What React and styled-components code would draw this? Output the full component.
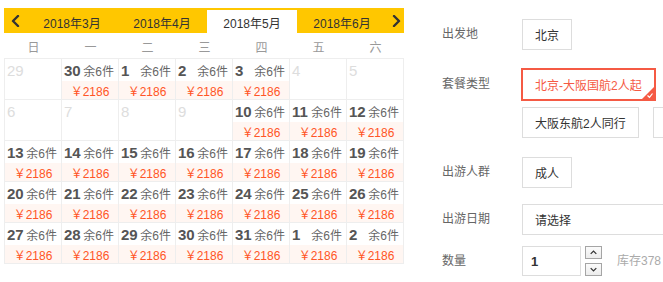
import React from "react";
import styled, { createGlobalStyle, css } from "styled-components";

const GlobalStyle = createGlobalStyle`
  html, body {
    margin: 0;
    padding: 0;
    overflow: hidden;
    background: #fff;
  }
  body {
    font-family: "Liberation Sans", "Noto Sans CJK SC", sans-serif;
    font-size: 12px;
    color: #333;
  }
`;

const Page = styled.div`
  display: flex;
  align-items: flex-start;
  width: 900px;
`;

/* ---------- calendar ---------- */

const Calendar = styled.div`
  width: 400px;
  margin: 8px 0 0 4px;
`;

const MonthBar = styled.div`
  display: flex;
  height: 25px;
  background: #ffc700;
`;

const Arrow = styled.button`
  width: ${(p) => p.w}px;
  border: 0;
  padding: 0;
  background: transparent;
  display: flex;
  align-items: center;
  justify-content: center;
  cursor: pointer;
`;

const MonthTab = styled.div`
  width: 90px;
  margin-top: 2px;
  display: flex;
  align-items: center;
  justify-content: center;
  font-size: 12px;
  color: #333;
  padding-top: 1px;

  ${(p) =>
    p.active &&
    css`
      background: #fff;
    `}
`;

const WeekRow = styled.div`
  display: grid;
  grid-template-columns: repeat(7, 57px);
  height: 25px;
  align-items: center;
  padding-left: 1px;
`;

const WeekDay = styled.div`
  text-align: center;
  color: #999;
  font-size: 12px;
  padding-top: 2px;
`;

const Grid = styled.div`
  display: grid;
  grid-template-columns: repeat(7, 57px);
  border-top: 1px solid #eee;
  border-left: 1px solid #eee;
`;

const Cell = styled.div`
  height: 40px;
  border-right: 1px solid #eee;
  border-bottom: 1px solid #eee;
  display: flex;
  flex-direction: column;
`;

const CellTop = styled.div`
  height: 22px;
  display: flex;
  align-items: center;
  justify-content: space-between;
  padding: 0 4px 0 2px;
`;

const DayNum = styled.span`
  font-size: 15px;
  font-weight: ${(p) => (p.muted ? 400 : 700)};
  color: ${(p) => (p.muted ? "#ddd" : "#555")};
`;

const Stock = styled.span`
  font-size: 12px;
  color: #666;
`;

const Price = styled.div`
  height: 18px;
  background: #fff6f2;
  color: #ff5526;
  font-size: 12px;
  display: flex;
  align-items: center;
  justify-content: center;
`;

/* ---------- form ---------- */

const Form = styled.div`
  margin-left: 38px;
  padding-top: 19px;
  display: flex;
  flex-direction: column;
`;

const Row = styled.div`
  display: flex;
  align-items: flex-start;
  margin-bottom: ${(p) => p.gap || 0}px;
`;

const Label = styled.div`
  width: 80px;
  line-height: 31px;
  color: #666;
  font-size: 12px;
`;

const Options = styled.div`
  width: 254px;
  display: flex;
  flex-wrap: wrap;
  gap: 7px 14px;
`;

const Option = styled.div`
  position: relative;
  height: 29px;
  padding: 0 12px;
  border: 1px solid #ddd;
  display: flex;
  align-items: center;
  font-size: 12px;
  color: #333;
  white-space: nowrap;

  ${(p) =>
    p.selected &&
    css`
      margin: -1px;
      border: 2px solid #f55a44;
      color: #f55a44;
    `}
`;

const Corner = styled.span`
  position: absolute;
  right: 0;
  bottom: 0;
  width: 12px;
  height: 12px;
  display: flex;
`;

const SelectBox = styled.div`
  width: 260px;
  height: 29px;
  border: 1px solid #ddd;
  display: flex;
  align-items: center;
  padding-left: 12px;
  font-size: 12px;
  color: #333;
`;

const QtyInput = styled.input`
  box-sizing: border-box;
  width: 59px;
  height: 30px;
  border: 1px solid #ddd;
  padding: 0 8px;
  font-family: inherit;
  font-size: 13px;
  font-weight: 700;
  color: #333;
  outline: none;
`;

const Spinner = styled.div`
  display: flex;
  flex-direction: column;
  gap: 4px;
  margin-left: 4px;
`;

const SpinButton = styled.button`
  box-sizing: border-box;
  width: 17px;
  height: 13px;
  padding: 0;
  border: 1px solid #a5a5a5;
  background: linear-gradient(#fbfbfb, #ececec);
  display: flex;
  align-items: center;
  justify-content: center;
`;

const Inventory = styled.span`
  margin-left: 15px;
  line-height: 30px;
  color: #aaa;
  font-size: 12px;
  white-space: nowrap;
`;

const ChevronIcon = ({ dir, size = 10, stroke = 2.4, color = "#333" }) => {
  const pts = {
    left: "7,1 2,6 7,11",
    right: "3,1 8,6 3,11",
  };
  return (
    <svg width={size} height={size + 2} viewBox="0 0 10 12">
      <polyline
        points={pts[dir]}
        fill="none"
        stroke={color}
        strokeWidth={stroke}
        strokeLinecap="round"
        strokeLinejoin="round"
      />
    </svg>
  );
};

const SmallChevron = ({ dir }) => (
  <svg width="9" height="7" viewBox="0 0 12 10">
    <polyline
      points={dir === "up" ? "2,7 6,3 10,7" : "2,3 6,7 10,3"}
      fill="none"
      stroke="#333"
      strokeWidth="1.8"
    />
  </svg>
);

const weekDays = ["日", "一", "二", "三", "四", "五", "六"];
const months = ["2018年3月", "2018年4月", "2018年5月", "2018年6月"];

const days = [
  [29, 0], [30, 1], [1, 1], [2, 1], [3, 1], [4, 0], [5, 0],
  [6, 0], [7, 0], [8, 0], [9, 0], [10, 1], [11, 1], [12, 1],
  [13, 1], [14, 1], [15, 1], [16, 1], [17, 1], [18, 1], [19, 1],
  [20, 1], [21, 1], [22, 1], [23, 1], [24, 1], [25, 1], [26, 1],
  [27, 1], [28, 1], [29, 1], [30, 1], [31, 1], [1, 1], [2, 1],
];

export default function App() {
  return (
    <>
      <GlobalStyle />
      <Page>
        <Calendar>
          <MonthBar>
            <Arrow w={23}>
              <ChevronIcon dir="left" />
            </Arrow>
            {months.map((m) => (
              <MonthTab key={m} active={m === "2018年5月"}>
                {m}
              </MonthTab>
            ))}
            <Arrow w={17}>
              <ChevronIcon dir="right" />
            </Arrow>
          </MonthBar>
          <WeekRow>
            {weekDays.map((w) => (
              <WeekDay key={w}>{w}</WeekDay>
            ))}
          </WeekRow>
          <Grid>
            {days.map(([d, has], i) => (
              <Cell key={i}>
                <CellTop>
                  <DayNum muted={!has}>{d}</DayNum>
                  {has ? <Stock>余6件</Stock> : null}
                </CellTop>
                {has ? <Price>￥2186</Price> : null}
              </Cell>
            ))}
          </Grid>
        </Calendar>

        <Form>
          <Row gap={19}>
            <Label>出发地</Label>
            <Options>
              <Option>北京</Option>
            </Options>
          </Row>
          <Row gap={19}>
            <Label>套餐类型</Label>
            <Options>
              <Option selected>
                北京-大阪国航2人起
                <Corner>
                  <svg width="12" height="12" viewBox="0 0 12 12">
                    <polygon points="12,0 12,12 0,12" fill="#f55a44" />
                    <polyline
                      points="5.5,8.5 7.5,10.3 10.5,6.5"
                      fill="none"
                      stroke="#fff"
                      strokeWidth="1.2"
                    />
                  </svg>
                </Corner>
              </Option>
              <Option>大阪东航2人同行</Option>
              <Option>大阪国航2人同行</Option>
            </Options>
          </Row>
          <Row gap={16}>
            <Label>出游人群</Label>
            <Options>
              <Option>成人</Option>
            </Options>
          </Row>
          <Row gap={11}>
            <Label>出游日期</Label>
            <SelectBox>请选择</SelectBox>
          </Row>
          <Row>
            <Label>数量</Label>
            <QtyInput defaultValue="1" />
            <Spinner>
              <SpinButton>
                <SmallChevron dir="up" />
              </SpinButton>
              <SpinButton>
                <SmallChevron dir="down" />
              </SpinButton>
            </Spinner>
            <Inventory>库存378</Inventory>
          </Row>
        </Form>
      </Page>
    </>
  );
}
